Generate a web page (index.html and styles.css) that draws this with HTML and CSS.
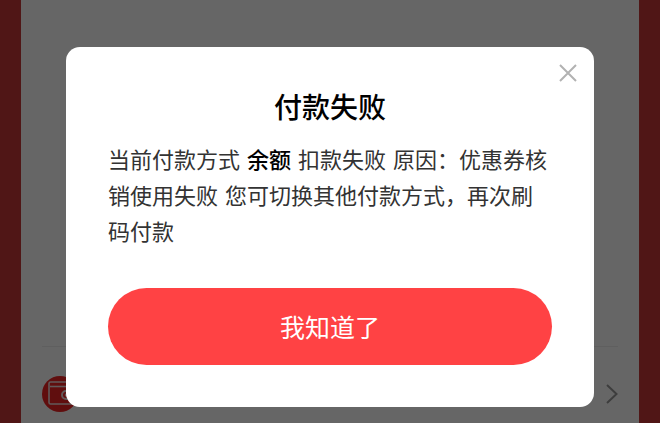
FILE: index.html
```html
<!DOCTYPE html>
<html lang="zh-CN">
<head>
  <meta charset="UTF-8">
  <meta name="viewport" content="width=device-width, initial-scale=1.0">
  <title>付款失败</title>
  <link rel="stylesheet" href="styles.css">
</head>
<body>

<main class="pay-card">
  <div class="pay-code"></div>
  <div class="pay-method">
    <svg class="wallet-icon" viewBox="0 0 36 36" aria-hidden="true">
      <circle cx="18" cy="18" r="18" fill="#f02424"/>
      <g fill="none" stroke="#f2dede" stroke-width="1.6">
        <rect x="7" y="6" width="24" height="22" rx="1.5"/>
        <path d="M8 10.500h23"/>
        <path d="M31 15h-7a4 4 0 0 0 0 8h7" stroke-width="2"/>
        <circle cx="24.5" cy="19" r="1"/>
      </g>
    </svg>
    <svg class="arrow-icon" viewBox="0 0 12 20" aria-hidden="true">
      <path d="M1 1l9.500 9-9.500 9" fill="none" stroke="#999" stroke-width="2"/>
    </svg>
  </div>
</main>

<div class="overlay">
  <div class="dialog" role="dialog" aria-modal="true" aria-labelledby="dialogTitle">
    <button class="dialog-close" type="button" aria-label="关闭">
      <svg viewBox="0 0 18 18" aria-hidden="true">
        <path d="M1 1l16 16M17 1L1 17" fill="none" stroke="#b2b2b2" stroke-width="2"/>
      </svg>
    </button>
    <h1 class="dialog-title" id="dialogTitle">付款失败</h1>
    <p class="dialog-text">当前付款方式 <strong>余额</strong> 扣款失败 原因：优惠券核销使用失败 您可切换其他付款方式，再次刷码付款</p>
    <button class="dialog-button" type="button">我知道了</button>
  </div>
</div>

</body>
</html>
```
FILE: styles.css
```css
* {
  box-sizing: border-box;
}

body {
  margin: 0;
  min-height: 100vh;
  padding: 0 21px;
  background: #c83737;
  font-family: "DejaVu Sans", "Noto Sans CJK SC", sans-serif;
}

/* Page under the dialog */
.pay-card {
  min-height: 100vh;
  padding: 0 21px;
  background: #fff;
}

.pay-code {
  height: 347px;
  border-bottom: 1px solid #eee;
}

.pay-method {
  display: flex;
  align-items: center;
  justify-content: space-between;
  padding: 29px 0 10px;
}

.wallet-icon {
  width: 36px;
  height: 36px;
}

.arrow-icon {
  width: 12px;
  height: 20px;
}

/* Dialog */
.overlay {
  position: fixed;
  inset: 0;
  padding-top: 47px;
  background: rgba(0, 0, 0, 0.6);
}

.dialog {
  position: relative;
  width: 80%;
  margin: 0 auto;
  padding: 42px 42px 42px;
  background: #fff;
  border-radius: 14px;
}

.dialog-close {
  position: absolute;
  top: 17px;
  right: 17px;
  width: 18px;
  height: 18px;
  padding: 0;
  background: none;
  border: none;
  cursor: pointer;
}

.dialog-close svg {
  display: block;
}

.dialog-title {
  margin: 0;
  color: #000;
  font-size: 28px;
  font-weight: 500;
  line-height: 40px;
  text-align: center;
}

.dialog-text {
  margin: 14px 0 37px;
  color: #333;
  font-size: 22px;
  line-height: 36px;
}

.dialog-text strong {
  color: #000;
  font-weight: 500;
}

.dialog-button {
  display: block;
  width: 100%;
  height: 77px;
  padding: 0 0 2px;
  color: #fff;
  background: #ff4244;
  border: none;
  border-radius: 39px;
  font-family: inherit;
  font-size: 25px;
  cursor: pointer;
}
```
